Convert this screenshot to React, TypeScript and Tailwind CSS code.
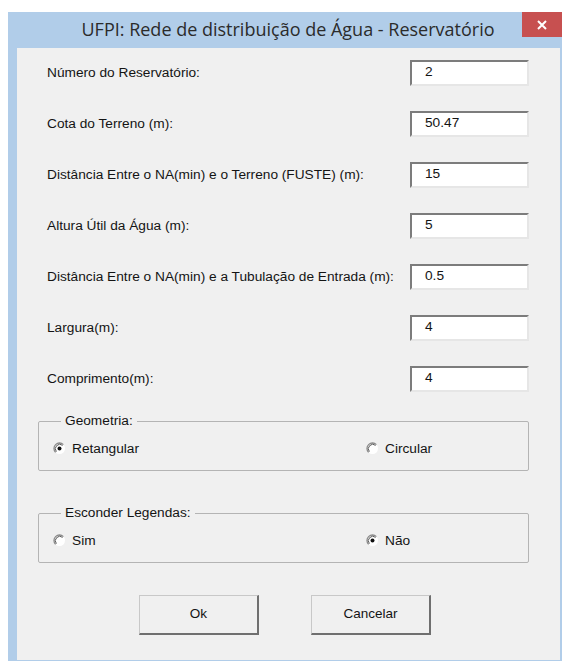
import React from "react";

const fields = [
  { label: "Número do Reservatório:", value: "2" },
  { label: "Cota do Terreno (m):", value: "50.47" },
  { label: "Distância Entre o NA(min) e o Terreno (FUSTE) (m):", value: "15" },
  { label: "Altura Útil da Água (m):", value: "5" },
  { label: "Distância Entre o NA(min) e a Tubulação de Entrada (m):", value: "0.5" },
  { label: "Largura(m):", value: "4" },
  { label: "Comprimento(m):", value: "4" },
];

// classic sunken radio button
const Radio = ({ checked }: { checked?: boolean }) => (
  <svg width="13" height="13" viewBox="0 0 13 13" className="shrink-0">
    <circle cx="6.5" cy="6.5" r="5.5" fill="#fff" />
    <path d="M2.6 10.4 A5.5 5.5 0 0 1 10.4 2.6" fill="none" stroke="#8a8a8a" strokeWidth="1.3" />
    <path d="M3.4 9.6 A4.4 4.4 0 0 1 9.6 3.4" fill="none" stroke="#5a5a5a" strokeWidth="1" />
    {checked && <circle cx="6.5" cy="6.5" r="2" fill="#111" />}
  </svg>
);

const Option = ({ label, checked, className }: { label: string; checked?: boolean; className?: string }) => (
  <label className={`flex items-center gap-[6px] ${className ?? ""}`}>
    <Radio checked={checked} />
    <span>{label}</span>
  </label>
);

const Group = ({ title, children }: { title: string; children: React.ReactNode }) => (
  <fieldset className="border border-[#b4b4b4] rounded-[2px] h-[58px] px-[14px]">
    <legend className="ml-[8px] px-[4px] leading-[16px]">{title}</legend>
    <div className="flex items-center h-[31px] pt-[9px]">{children}</div>
  </fieldset>
);

const Button = ({ children }: { children: React.ReactNode }) => (
  <button className="w-[120px] h-[40px] bg-[#f0f0f0] border border-[#c8c8c8] border-r-2 border-b-2 border-r-[#6f6f6f] border-b-[#6f6f6f] text-[13.5px]">
    {children}
  </button>
);

export default function App() {
  return (
    <div className="w-[562px] h-[661px] bg-white pt-[12px] pl-[8px] overflow-hidden">
      <div
        className="h-full flex flex-col bg-[#b1cde9]"
        style={{ fontFamily: '"Liberation Sans", Arial, sans-serif' }}
      >
        {/* title bar */}
        <div className="relative h-[36px] flex items-center justify-center shrink-0">
          <span
            className="text-[18px] text-[#2b2b2b] pb-[2px] pl-[6px]"
            style={{ fontFamily: '"Open Sans", "Noto Sans", sans-serif' }}
          >
            UFPI: Rede de distribuição de Água - Reservatório
          </span>
          <div className="absolute right-0 top-0 w-[40px] h-[25px] bg-[#c75050] flex items-center justify-center">
            <svg width="10" height="10" viewBox="0 0 10 10">
              <path d="M1 1 L9 9 M9 1 L1 9" stroke="#fff" strokeWidth="2" />
            </svg>
          </div>
        </div>

        {/* client area */}
        <div className="flex-1 ml-[9px] mr-[2px] mb-[1px] bg-[#f0f0f0] pl-[21px] pr-[31px] pt-[12px] text-[13.7px] text-[#141414]">
          <div className="flex flex-col gap-[25px]">
            {fields.map((f) => (
              <div key={f.label} className="flex items-center justify-between h-[26px] pl-[9px]">
                <span>{f.label}</span>
                <div className="w-[119px] h-[26px] bg-white border-2 border-t-[#7c7c7c] border-l-[#7c7c7c] border-r-[#e6e6e6] border-b-[#e6e6e6] flex items-center pl-[13px] pb-[2px]">
                  {f.value}
                </div>
              </div>
            ))}
          </div>

          <div className="mt-[21px] flex flex-col gap-[34px]">
            <Group title="Geometria:">
              <Option label="Retangular" checked className="w-[313px]" />
              <Option label="Circular" />
            </Group>
            <Group title="Esconder Legendas:">
              <Option label="Sim" className="w-[313px]" />
              <Option label="Não" checked />
            </Group>
          </div>

          <div className="mt-[32px] flex gap-[52px] pl-[101px]">
            <Button>Ok</Button>
            <Button>Cancelar</Button>
          </div>
        </div>
      </div>
    </div>
  );
}
